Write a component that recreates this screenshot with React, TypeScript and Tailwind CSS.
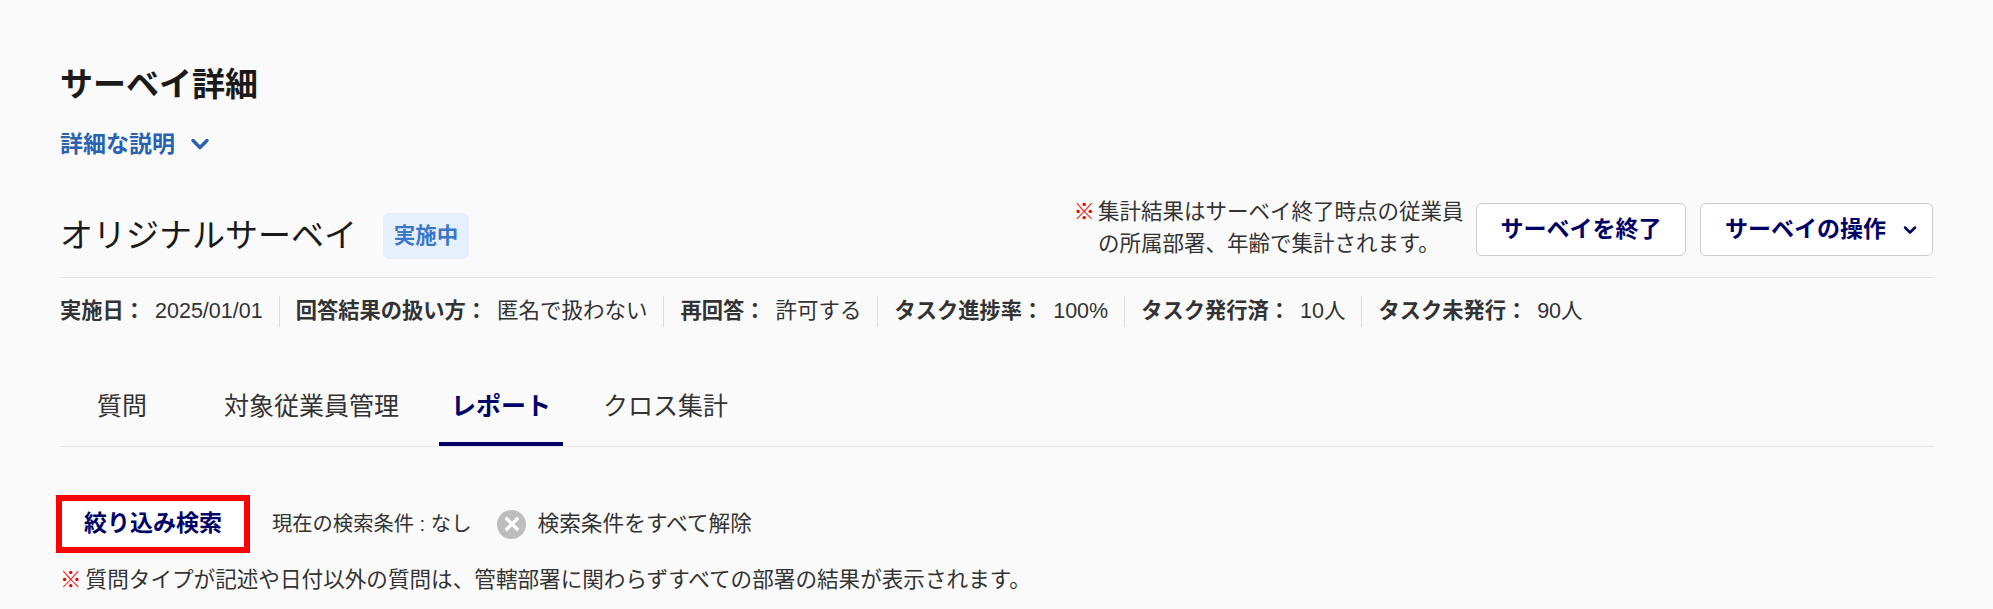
import React from 'react';
import { ChevronDown } from 'lucide-react';

const fontClass = "font-['Liberation_Sans','Noto_Sans_CJK_JP',sans-serif]";

const metaItems = [
  { label: '実施日：', value: '2025/01/01' },
  { label: '回答結果の扱い方：', value: '匿名で扱わない' },
  { label: '再回答：', value: '許可する' },
  { label: 'タスク進捗率：', value: '100%' },
  { label: 'タスク発行済：', value: '10人' },
  { label: 'タスク未発行：', value: '90人' },
];

const tabs = ['質問', '対象従業員管理', 'レポート', 'クロス集計'];

export default function App() {
  return (
    <div className={`${fontClass} min-h-[609px] bg-[#fafafa] px-[60px] pt-[62px] text-[#333333]`}>
      <h1 className="text-[33px] leading-[46px] font-bold text-[#1a1a1a]">サーベイ詳細</h1>

      <button className="mt-[22px] flex h-[28px] items-center gap-[11px] text-[23px] font-bold text-[#2a62b0]">
        詳細な説明
        <ChevronDown className="h-[28px] w-[28px]" strokeWidth={3} />
      </button>

      <div className="mt-[45px] flex h-[61px] items-start justify-between">
        <div className="flex items-center pt-[10px]">
          <h2 className="text-[33px] leading-[46px] text-[#1a1a1a]">オリジナルサーベイ</h2>
          <span className="ml-[26px] flex h-[46px] w-[86px] items-center justify-center rounded-[6px] bg-[#e6f0fd] text-[21.5px] font-bold text-[#3b77c9]">
            実施中
          </span>
        </div>
        <div className="flex items-start">
          <div className="mt-[-7px] mr-[11px] flex text-[21.5px] leading-[32px]">
            <span className="mr-[3px] text-[#f00000]">※</span>
            <p className="w-[367px] whitespace-nowrap">
              集計結果はサーベイ終了時点の従業員
              <br />
              の所属部署、年齢で集計されます。
            </p>
          </div>
          <button className="h-[53px] w-[210px] rounded-[6px] border border-[#cccccc] bg-white text-[23px] font-bold text-[#000066]">
            サーベイを終了
          </button>
          <button className="ml-[14px] flex h-[53px] w-[233px] items-center justify-between rounded-[6px] border border-[#cccccc] bg-white pr-[12px] pl-[24px] text-[23px] font-bold text-[#000066]">
            サーベイの操作
            <ChevronDown className="h-[20px] w-[20px]" strokeWidth={3} />
          </button>
        </div>
      </div>

      <div className="mt-[13px] flex h-[68px] items-center border-t border-[#e2e2e2] text-[21.25px]">
        {metaItems.map((item, i) => (
          <div
            key={item.label}
            className={`flex h-[31px] items-center ${i > 0 ? 'ml-[16px] border-l border-[#dddddd] pl-[16px]' : ''}`}
          >
            <span className="font-bold">{item.label}</span>
            <span className="ml-[10px] text-[21.5px]">{item.value}</span>
          </div>
        ))}
      </div>

      <div className="mt-[33px] flex h-[69px] gap-[28px] border-b border-[#e5e5e5]">
        {tabs.map((tab) => {
          const active = tab === 'レポート';
          return (
            <div
              key={tab}
              className={`min-w-[124px] px-[12px] pt-[10px] text-center text-[25px] leading-[36px] ${
                active ? 'border-b-[4px] border-[#000066] font-bold text-[#000066]' : ''
              }`}
            >
              {tab}
            </div>
          );
        })}
      </div>

      <div className="mt-[48px] flex items-center">
        <button className="ml-[-4px] h-[58px] w-[194px] border-[6px] border-[#ff0000] bg-white pb-[2px] text-[23px] font-bold text-[#000066]">
          絞り込み検索
        </button>
        <span className="ml-[22px] text-[20.3px]">現在の検索条件 : なし</span>
        <span className="ml-[26px] flex h-[29px] w-[29px] items-center justify-center rounded-full bg-[#bdbdbd]">
          <svg viewBox="0 0 16 16" className="h-[20px] w-[20px]" stroke="white" strokeWidth="2.6" fill="none">
            <path d="M3 3l10 10M13 3L3 13" />
          </svg>
        </span>
        <span className="ml-[11px] text-[21.7px]">検索条件をすべて解除</span>
      </div>

      <p className="mt-[10px] text-[21.6px] leading-[34px]">
        <span className="mr-[4px] text-[#f00000]">※</span>質問タイプが記述や日付以外の質問は、管轄部署に関わらずすべての部署の結果が表示されます。
      </p>
    </div>
  );
}
